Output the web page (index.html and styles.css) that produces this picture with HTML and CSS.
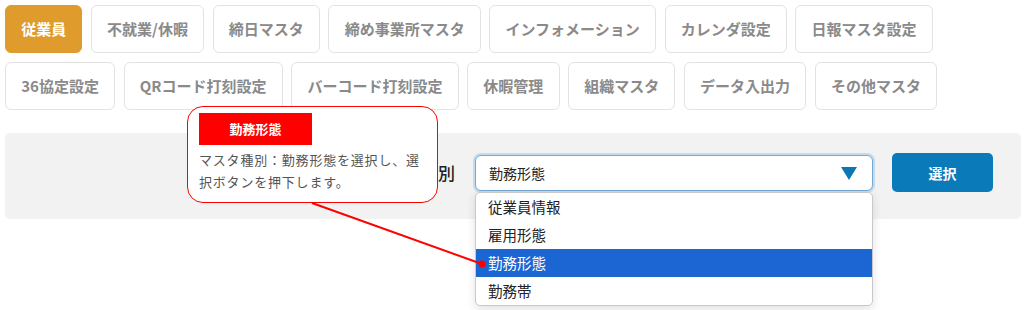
FILE: index.html
```html
<!DOCTYPE html>
<html lang="ja">
<head>
  <meta charset="UTF-8">
  <meta name="viewport" content="width=device-width, initial-scale=1">
  <title>マスタ設定</title>
  <link rel="stylesheet" href="styles.css">
</head>

<body>

  <div class="tabs">
    <a class="tab active" href="#">従業員</a>
    <a class="tab" href="#">不就業/休暇</a>
    <a class="tab" href="#">締日マスタ</a>
    <a class="tab" href="#">締め事業所マスタ</a>
    <a class="tab" href="#">インフォメーション</a>
    <a class="tab" href="#">カレンダ設定</a>
    <a class="tab" href="#">日報マスタ設定</a>
    <a class="tab" href="#">36協定設定</a>
    <a class="tab" href="#">QRコード打刻設定</a>
    <a class="tab" href="#">バーコード打刻設定</a>
    <a class="tab" href="#">休暇管理</a>
    <a class="tab" href="#">組織マスタ</a>
    <a class="tab" href="#">データ入出力</a>
    <a class="tab" href="#">その他マスタ</a>
  </div>

  <div class="select-panel">
    <div class="field-label">マスタ種別</div>
    <div class="select-wrap">
      <div class="select-box">
        <span>勤務形態</span>
        <span class="arrow"></span>
      </div>
      <ul class="options">
        <li>従業員情報</li>
        <li>雇用形態</li>
        <li class="selected">勤務形態</li>
        <li>勤務帯</li>
      </ul>
    </div>
    <button class="select-btn">選択</button>
  </div>

  <!-- annotation callout -->
  <div class="callout">
    <div class="callout-title">勤務形態</div>
    <p class="callout-text">マスタ種別：勤務形態を選択し、選択ボタンを押下します。</p>
  </div>
  <svg class="pointer" width="1024" height="310" viewBox="0 0 1024 310">
    <line x1="312" y1="203" x2="482" y2="264" stroke="#ff0000" stroke-width="2"/>
    <circle cx="482" cy="264" r="3.5" fill="#ff0000"/>
  </svg>

</body>
</html>
```

FILE: styles.css
```css
:root {
  --accent: #e09b2d;
  --tab-border: #e3e3e3;
  --tab-text: #8a8a8a;
  --panel-bg: #f2f2f2;
  --btn-color: #0b7ab8;
  --note-red: #ff0000;
}

* { margin: 0; padding: 0; box-sizing: border-box; }

body {
  font-family: "Noto Sans CJK JP", "Noto Sans", sans-serif;
  background: #fff;
  padding: 5px 3px 5px 5px;
  width: 1024px;
  height: 310px;
  overflow: hidden;
  position: relative;
}

.tabs {
  display: flex;
  flex-wrap: wrap;
  gap: 9px 8.5px;
}

.tab {
  display: block;
  height: 48px;
  line-height: 46px;
  padding: 0 15.2px;
  border: 1px solid var(--tab-border);
  border-radius: 6px;
  font-size: 15px;
  font-weight: bold;
  color: var(--tab-text);
  text-decoration: none;
  white-space: nowrap;
}

.tab.active {
  background: var(--accent);
  border-color: var(--accent);
  color: #fff;
}

.select-panel {
  margin-top: 23px;
  height: 86px;
  background: var(--panel-bg);
  border-radius: 5px;
  display: flex;
  align-items: center;
  justify-content: flex-end;
  padding: 0 28px 6px 0;
}

.field-label {
  font-size: 17px;
  font-weight: 500;
  color: #222;
  margin-right: 20px;
  margin-top: -1px;
}

.select-wrap {
  position: relative;
  width: 398px;
  margin-right: 19px;
}

.select-box {
  height: 36px;
  display: flex;
  align-items: center;
  justify-content: space-between;
  padding: 0 15px 0 13px;
  background: #fff;
  border: 1px solid #74a9d4;
  border-radius: 6px;
  box-shadow: 0 0 0 2px rgba(140, 190, 230, 0.45);
  font-size: 14px;
  color: #222;
}

.arrow {
  width: 0;
  height: 0;
  border-left: 8px solid transparent;
  border-right: 8px solid transparent;
  border-top: 13px solid #0b78b6;
}

.options {
  position: absolute;
  top: 37px;
  left: 0;
  width: 100%;
  list-style: none;
  background: #fff;
  border: 1px solid #c9c9c9;
  border-radius: 5px;
  box-shadow: 0 3px 10px rgba(0, 0, 0, 0.12);
  overflow: hidden;
  z-index: 5;
}

.options li {
  height: 28px;
  line-height: 28px;
  padding-left: 12px;
  font-size: 14.5px;
  color: #222;
}

.options li.selected {
  background: #1b66d3;
  color: #fff;
}

.select-btn {
  width: 101px;
  height: 39px;
  margin-top: -1px;
  background: var(--btn-color);
  color: #fff;
  border: none;
  border-radius: 5px;
  font-family: inherit;
  font-size: 14px;
  font-weight: bold;
}

.callout {
  position: absolute;
  left: 187px;
  top: 106px;
  width: 251px;
  height: 97px;
  background: #fff;
  border: 1px solid var(--note-red);
  border-radius: 16px;
  padding: 6px 11px 0 11px;
  z-index: 10;
}

.callout-title {
  width: 113px;
  height: 32px;
  line-height: 32px;
  background: var(--note-red);
  color: #fff;
  font-size: 13px;
  font-weight: bold;
  text-align: center;
}

.callout-text {
  margin-top: 4px;
  font-size: 13px;
  line-height: 22px;
  letter-spacing: 0.8px;
  color: #555;
}

.pointer {
  position: absolute;
  left: 0;
  top: 0;
  z-index: 20;
  pointer-events: none;
}
```
